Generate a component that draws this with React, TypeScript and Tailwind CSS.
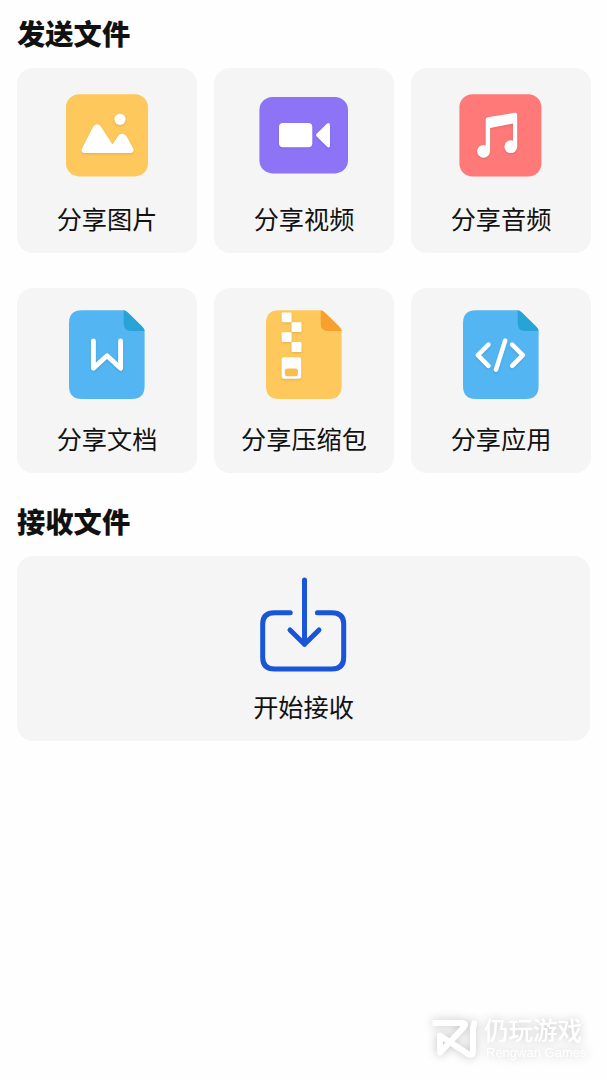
import type { ReactNode } from "react";

type ShareItem = {
  label: string;
  icon: ReactNode;
};

const shadow = "drop-shadow-[0_1px_1px_rgba(0,0,0,0.12)]";

function ImageIcon() {
  return (
    <svg width="90" height="90" viewBox="0 0 90 90">
      <rect x="4" y="4.2" width="82" height="82.2" rx="13" fill="#fec85c" />
      <g fill="#fff" className={shadow}>
        <circle cx="58" cy="29.3" r="5.6" />
        <path
          d="M22.5 60 L33.5 38.5 Q35 35.8 36.7 38.5 L50.5 60 L58.5 48 Q60.3 45.5 62 48 L68.5 60 Z"
          stroke="#fff"
          strokeWidth="6"
          strokeLinejoin="round"
        />
      </g>
    </svg>
  );
}

function VideoIcon() {
  return (
    <svg width="90" height="90" viewBox="0 0 90 90">
      <rect x="0.4" y="7" width="88.6" height="76.4" rx="13" fill="#8d74f7" />
      <g fill="#fff" className={shadow}>
        <rect x="20" y="33" width="33.3" height="24.3" rx="4" />
        <path d="M58 43.6 L67.8 33.8 Q71 31.5 71 35.5 V55 Q71 59 67.8 56.6 L58 46.8 Q56.2 45.2 58 43.6 Z" />
      </g>
    </svg>
  );
}

function AudioIcon() {
  return (
    <svg width="90" height="90" viewBox="0 0 90 90">
      <rect x="3.4" y="4.2" width="82" height="82.3" rx="13" fill="#ff7979" />
      <g fill="#fff" className={shadow}>
        <path d="M29.7 61.3 V29.6 Q29.7 27.6 31.7 27.3 L58.7 22.8 Q61.2 22.4 61.2 25 V56.7 H57 V33.4 L34.1 38 V61.3 Z" />
        <circle cx="27.6" cy="61.3" r="6.4" />
        <circle cx="54.8" cy="56.7" r="6.4" />
      </g>
    </svg>
  );
}

function FileIcon({
  color,
  fold,
  children,
}: {
  color: string;
  fold: string;
  children: ReactNode;
}) {
  return (
    <svg width="90" height="90" viewBox="0 0 90 90">
      <path
        d="M20 0.2 H62 L82.6 20.8 V76 Q82.6 89 69.6 89 H20 Q7 89 7 76 V13.2 Q7 0.2 20 0.2 Z"
        fill={color}
      />
      <path
        d="M61.7 0.2 Q63.5 0.2 66 2.5 L80.5 16.8 Q82.6 19 82.6 21 H69 Q61.7 21 61.7 13.5 Z"
        fill={fold}
      />
      <g className={shadow}>{children}</g>
    </svg>
  );
}

function DocIcon() {
  return (
    <FileIcon color="#53b5f2" fold="#27a3d5">
      <path
        d="M31.4 31 V58.3 L45 45.8 L58.6 58.3 V31"
        fill="none"
        stroke="#fff"
        strokeWidth="4.9"
        strokeLinecap="round"
        strokeLinejoin="round"
      />
    </FileIcon>
  );
}

function ZipIcon() {
  return (
    <FileIcon color="#fec85c" fold="#f7a02d">
      <g fill="#fff">
        <rect x="22.6" y="2.5" width="10" height="9.8" rx="1" />
        <rect x="32.5" y="12.3" width="10" height="9.8" rx="1" />
        <rect x="22.6" y="22.2" width="10" height="9.8" rx="1" />
        <rect x="32.5" y="32.1" width="10" height="10" rx="1" />
        <rect x="22.6" y="47.3" width="19.6" height="21.5" rx="2.4" />
      </g>
      <rect x="25.8" y="58.4" width="13.2" height="7.8" rx="2.6" fill="#f9bd50" />
    </FileIcon>
  );
}

function AppIcon() {
  return (
    <FileIcon color="#53b5f2" fold="#27a3d5">
      <path
        d="M32.4 34.6 L21.9 45.2 L32.4 55.8 M49.2 30.6 L40 59.6 M56.2 34.6 L66.8 45.2 L56.2 55.8"
        fill="none"
        stroke="#fff"
        strokeWidth="4.6"
        strokeLinecap="round"
        strokeLinejoin="round"
      />
    </FileIcon>
  );
}

function ReceiveIcon() {
  return (
    <svg
      width="90"
      height="100"
      viewBox="0 0 90 100"
      fill="none"
      stroke="#1955d6"
      strokeWidth="5"
      strokeLinecap="round"
      strokeLinejoin="round"
    >
      <path d="M31.2 40.8 H15.5 Q3.7 40.8 3.7 52 V85.5 Q3.7 97 15.5 97 H72.7 Q84.7 97 84.7 85.5 V52 Q84.7 40.8 72.7 40.8 H58.4" />
      <path d="M45.5 8 V72.3 M31 58 L45.5 72.3 L60 58" />
    </svg>
  );
}

const shareItems: ShareItem[] = [
  { label: "分享图片", icon: <ImageIcon /> },
  { label: "分享视频", icon: <VideoIcon /> },
  { label: "分享音频", icon: <AudioIcon /> },
  { label: "分享文档", icon: <DocIcon /> },
  { label: "分享压缩包", icon: <ZipIcon /> },
  { label: "分享应用", icon: <AppIcon /> },
];

function Watermark() {
  return (
    <footer
      className="mt-auto mr-[25px] mb-5 flex items-center gap-[7px] self-end text-white
      drop-shadow-[0_0_5px_rgba(0,0,0,0.24)]"
    >
      <svg width="45" height="40" viewBox="0 0 45 40" fill="none" stroke="#fff">
        <path
          d="M0.5 4 H30 Q35 4.5 31.5 8.5 L8 33.5 V16.5 L36 35 Q41 37.5 41 32 V9 L43 2"
          strokeWidth="6"
          strokeLinejoin="round"
        />
      </svg>
      <div className="flex w-[98px] flex-col gap-1">
        <span className="whitespace-nowrap text-[24.5px] font-medium leading-6">
          仍玩游戏
        </span>
        <span className="whitespace-nowrap pl-0.5 font-['Liberation_Sans',sans-serif] text-[13px] leading-[14px]">
          Rengwan Games
        </span>
      </div>
    </footer>
  );
}

export default function App() {
  return (
    <main
      className="flex min-h-[1080px] w-full flex-col bg-[#fefefe]
      font-['Noto_Sans_CJK_SC',sans-serif] text-[#111]"
    >
      <section className="pt-[13px] pr-4 pl-[17px]">
        <h2 className="text-[28.3px] font-black leading-10">发送文件</h2>
        <div className="mt-[15px] grid grid-cols-3 gap-x-[17px] gap-y-[35px]">
          {shareItems.map(({ label, icon }) => (
            <button
              key={label}
              className="flex h-[185px] flex-col items-center rounded-2xl bg-[#f5f5f5] pt-[22px]"
            >
              {icon}
              <span className="mt-5 text-[25.2px] leading-9">{label}</span>
            </button>
          ))}
        </div>
      </section>

      <section className="px-[17px] pt-7">
        <h2 className="text-[28.3px] font-black leading-10">接收文件</h2>
        <button
          className="mt-[15px] flex h-[185px] w-full flex-col items-center rounded-2xl
          bg-[#f5f5f5] pt-4"
        >
          <ReceiveIcon />
          <span className="mt-4 text-[25.2px] leading-9">开始接收</span>
        </button>
      </section>

      <Watermark />
    </main>
  );
}
